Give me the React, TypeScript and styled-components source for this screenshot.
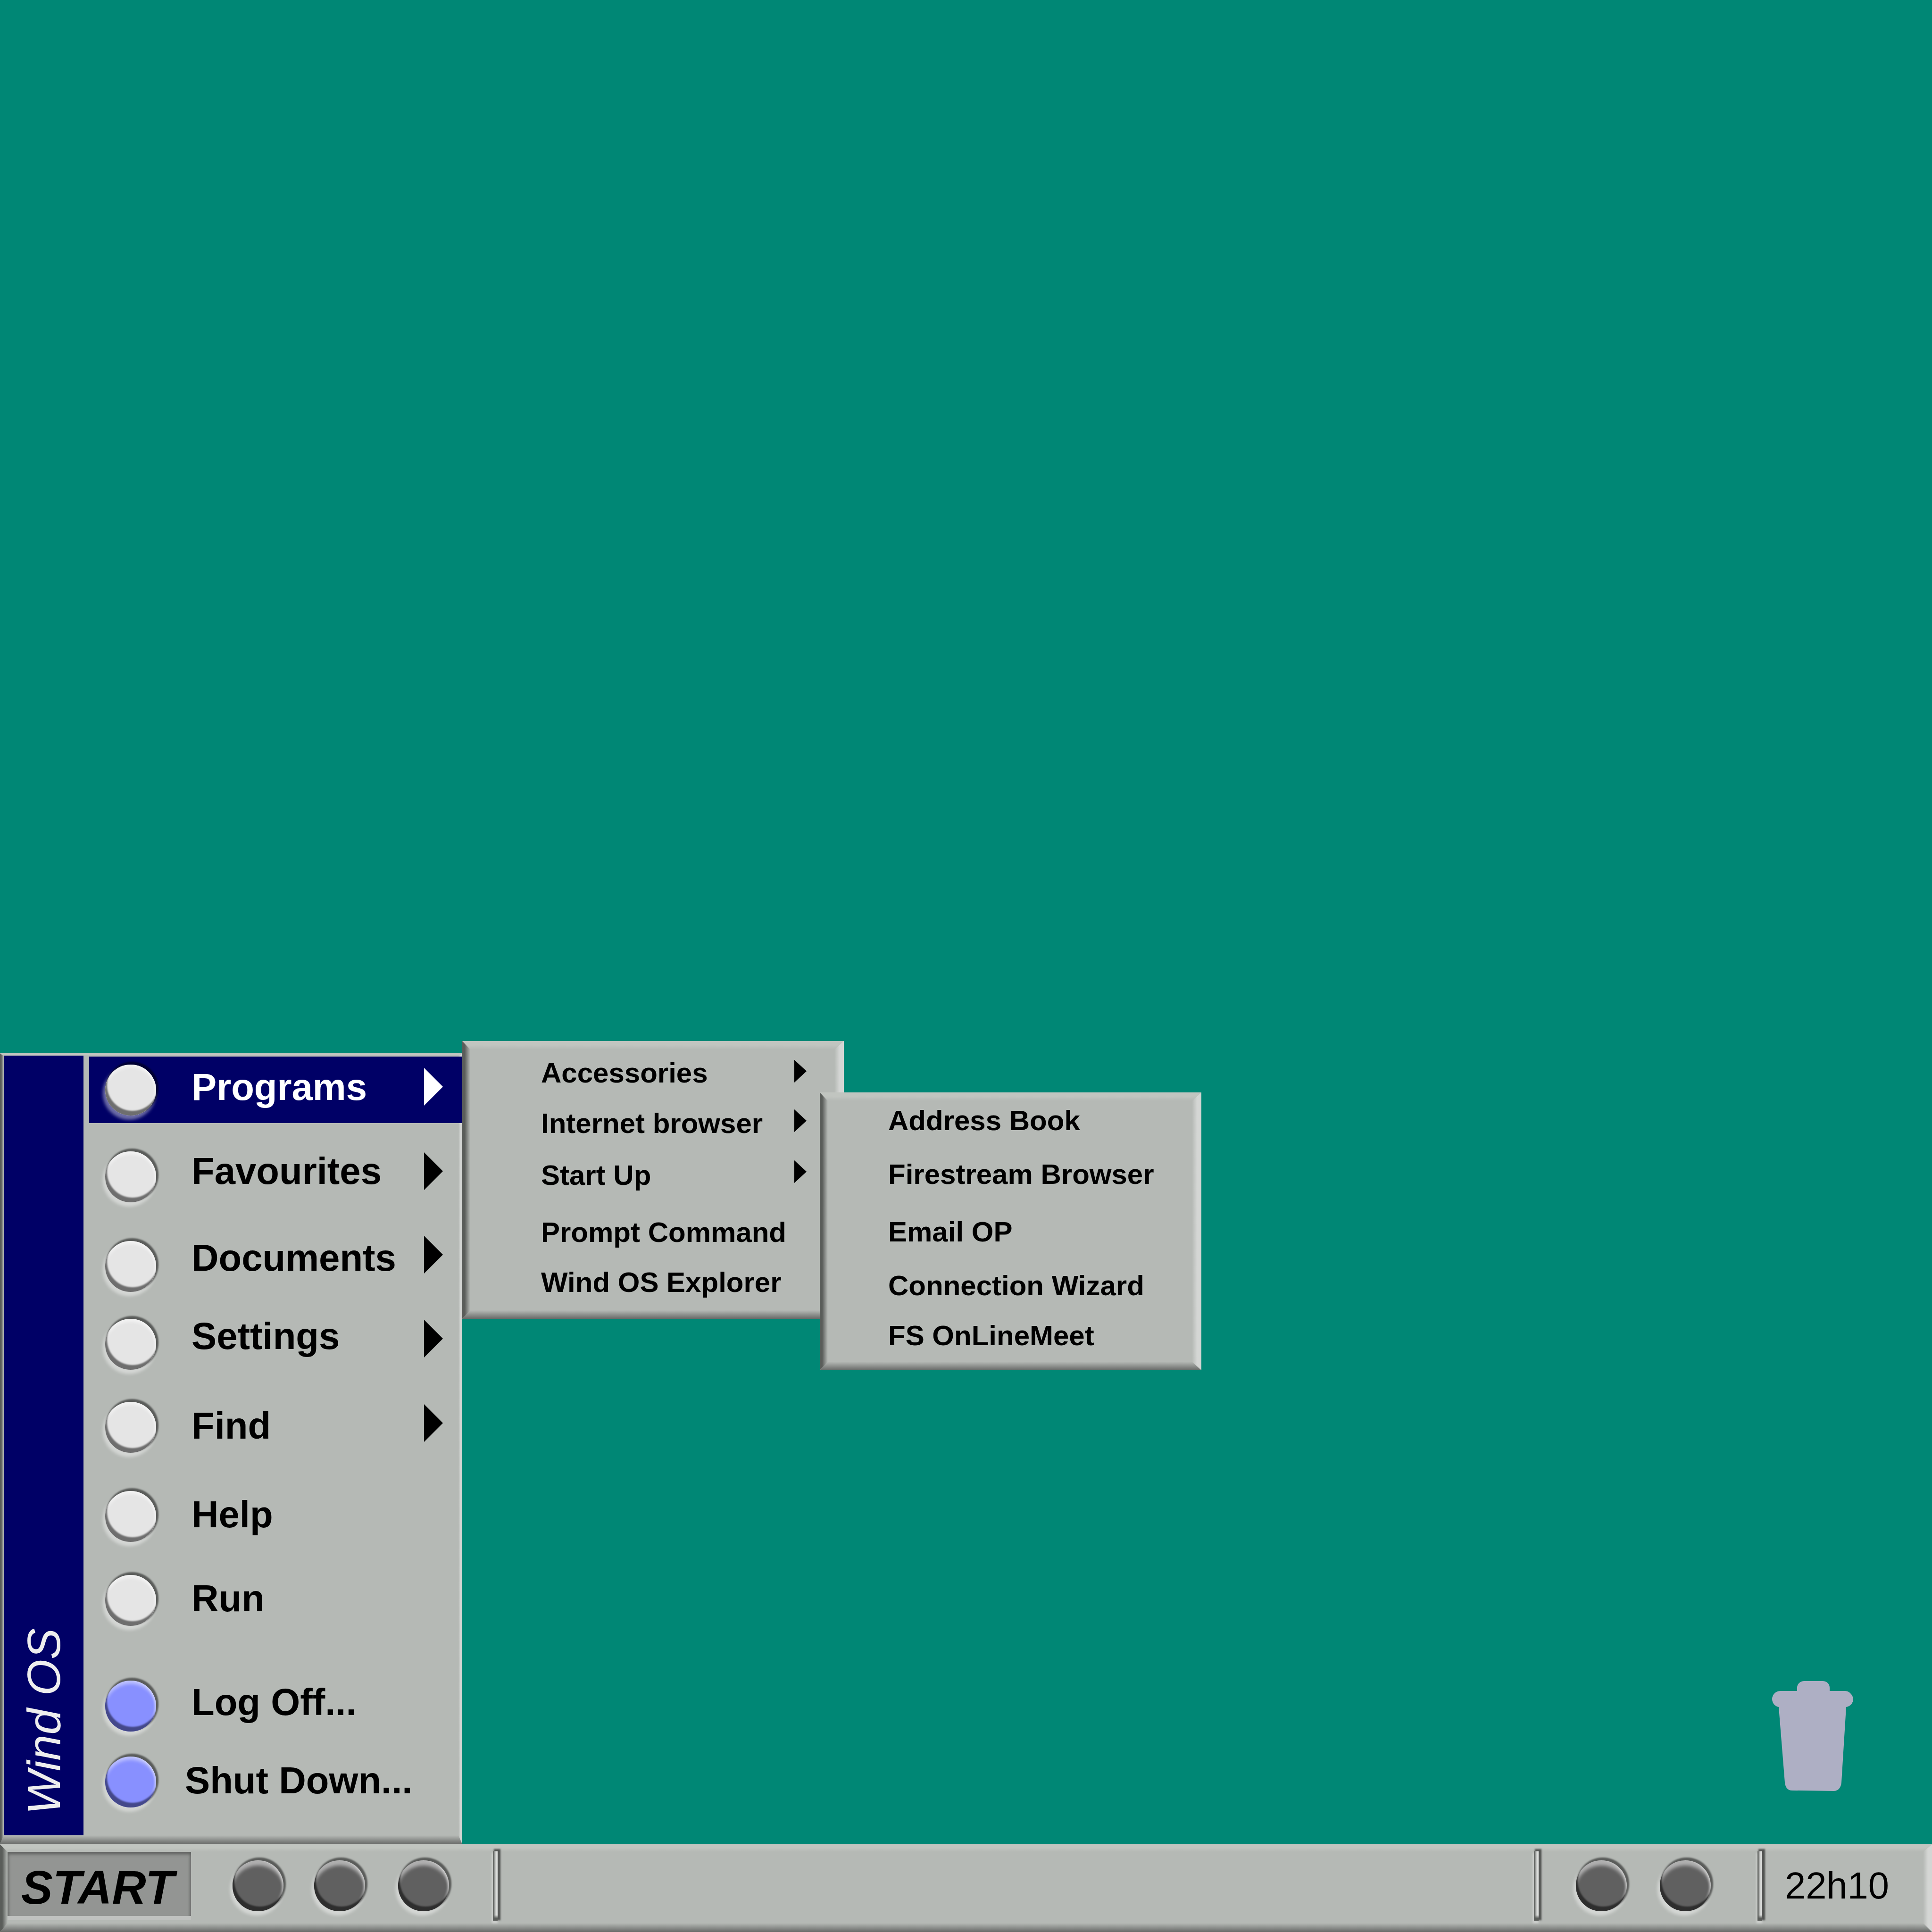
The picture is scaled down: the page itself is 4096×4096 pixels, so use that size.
import * as React from 'react';
import styled, {createGlobalStyle, css} from 'styled-components';

const colors = {
    DESKTOP: '#008775',
    PANEL: '#b5b9b5',
    NAVY: '#000066',
    TRASH: '#aeafc4',
    START: '#939593',
};

const tones = {
    light: {face: '#e5e5e5', low: '#6e6e6e', high: 'rgba(255,255,255,0.55)', glow: 8},
    blue: {face: '#8890ff', low: '#44488a', high: 'rgba(255,255,255,0.45)', glow: 9},
    dark: {face: '#606060', low: '#2e2e2e', high: 'rgba(255,255,255,0.5)', glow: 13},
};

type Tone = keyof typeof tones;

const GlobalStyle = createGlobalStyle`
    html, body {
        margin: 0;
        padding: 0;
        background: ${colors.DESKTOP};
    }
`;

const FADE = 'rgba(181, 185, 181, 0)';

// raised edge with mitred corners: sides in ::before, top and bottom in ::after.
// needs a positioned parent
const bevel = (top: number, right: number, bottom: number, left: number) => css`
    isolation: isolate;
    background: ${colors.PANEL};

    &::before,
    &::after {
        content: '';
        position: absolute;
        inset: 0;
        z-index: -1;
        background-repeat: no-repeat;
    }

    &::before {
        background-image:
            linear-gradient(90deg, #5a5d5a 30%, ${FADE} 100%),
            linear-gradient(270deg, #d4d6d4 45%, ${FADE} 100%);
        background-size: ${left}px 100%, ${right}px 100%;
        background-position: left top, right top;
    }

    &::after {
        background-color: ${colors.PANEL};
        background-image:
            linear-gradient(180deg, #c1c5c0 45%, ${FADE} 100%),
            linear-gradient(0deg, #686a68 0%, ${FADE} 100%);
        background-size: 100% ${top}px, 100% ${bottom}px;
        background-position: left top, left bottom;
        clip-path: polygon(
            0 0,
            100% 0,
            calc(100% - ${right}px) ${top}px,
            ${left}px ${top}px,
            0 0,
            0 100%,
            ${left}px calc(100% - ${bottom}px),
            calc(100% - ${right}px) calc(100% - ${bottom}px),
            100% 100%,
            0 100%
        );
    }
`;

const Page = styled.div`
    display: flex;
    flex-direction: column;
    width: 4096px;
    height: 4096px;
    overflow: hidden;
    font-family: 'Liberation Sans', Arial, sans-serif;
    color: #000;
`;

const Desktop = styled.main`
    position: relative;
    display: flex;
    flex: 1;
    align-items: flex-end;
    background: ${colors.DESKTOP};
`;

const StartMenu = styled.nav`
    position: relative;
    display: flex;
    box-sizing: border-box;
    width: 980px;
    height: 1677px;
    padding: 5px 0 19px 8px;
    ${bevel(6, 8, 19, 8)}
`;

const Sidebar = styled.div`
    display: flex;
    flex-direction: column;
    align-items: center;
    justify-content: flex-end;
    width: 169px;
    padding-bottom: 44px;
    box-sizing: border-box;
    background: ${colors.NAVY};
`;

const Brand = styled.span`
    writing-mode: vertical-rl;
    transform: rotate(180deg);
    font-size: 99px;
    line-height: 1;
    font-style: italic;
    white-space: nowrap;
    color: #eeeeee;
`;

const MenuList = styled.ul`
    display: flex;
    flex: 1;
    flex-direction: column;
    margin: 0;
    padding: 2px 0 0 12px;
    list-style: none;
`;

const MenuRow = styled.li<{$height: number; $active?: boolean}>`
    display: flex;
    align-items: flex-start;
    box-sizing: border-box;
    height: ${(props) => props.$height}px;
    padding: 0 41px 0 34px;
    color: ${(props) => (props.$active ? '#fff' : '#000')};
    background: ${(props) => (props.$active ? colors.NAVY : 'transparent')};
`;

const Bullet = styled.span<{$tone: Tone; $top?: number; $left?: number}>`
    flex: none;
    width: 108px;
    height: 108px;
    margin-top: ${(props) => props.$top || 0}px;
    margin-left: ${(props) => props.$left || 0}px;
    border-radius: 50%;
    background: ${(props) => tones[props.$tone].face};
    box-shadow:
        inset 4px -10px 3px 0 ${(props) => tones[props.$tone].low},
        inset 0 ${(props) => tones[props.$tone].glow}px 7px -2px ${(props) => tones[props.$tone].high},
        inset -5px 0 4px -2px ${(props) => tones[props.$tone].high},
        3px -4px 3px 2px rgba(0, 0, 0, 0.5),
        -3px 7px 6px 2px rgba(255, 255, 255, 0.42);
`;

const MenuLabel = styled.span<{$top: number; $left: number}>`
    margin-top: ${(props) => props.$top}px;
    margin-left: ${(props) => props.$left}px;
    font-size: 79.7px;
    line-height: 80px;
    font-weight: 700;
    white-space: nowrap;
`;

const Arrow = styled.span<{$top: number; $width: number; $height: number}>`
    flex: none;
    width: 0;
    height: 0;
    margin-top: ${(props) => props.$top}px;
    margin-left: auto;
    border-style: solid;
    border-color: transparent transparent transparent currentColor;
    border-width: ${(props) => props.$height / 2}px 0 ${(props) => props.$height / 2}px
        ${(props) => props.$width}px;
`;

const Flyout = styled.ul<{$left: number; $top: number; $padTop: number; $padLeft: number}>`
    position: absolute;
    left: ${(props) => props.$left}px;
    top: ${(props) => props.$top}px;
    display: flex;
    flex-direction: column;
    box-sizing: border-box;
    width: 809px;
    height: 589px;
    margin: 0;
    padding: ${(props) => props.$padTop}px 79px 0 ${(props) => props.$padLeft}px;
    list-style: none;
    ${bevel(18, 20, 18, 17)}
`;

const FlyoutRow = styled.li<{$gap: number}>`
    display: flex;
    align-items: flex-start;
    height: 60px;
    margin-top: ${(props) => props.$gap}px;
    font-size: 60px;
    line-height: 60px;
    font-weight: 700;
    white-space: nowrap;
`;

const Trash = styled.svg`
    position: absolute;
    right: 167px;
    top: 3564px;
    width: 172px;
    height: 233px;
    fill: ${colors.TRASH};
`;

const Taskbar = styled.footer`
    position: relative;
    display: flex;
    flex: none;
    align-items: center;
    box-sizing: border-box;
    height: 186px;
    padding: 0 0 10px 16px;
    ${bevel(16, 19, 19, 16)}
`;

const StartButton = styled.button`
    display: flex;
    align-items: center;
    box-sizing: border-box;
    width: 389px;
    height: 145px;
    padding: 7px 0 0 29px;
    border: 0;
    font-family: inherit;
    font-size: 100px;
    font-weight: 700;
    font-style: italic;
    color: #000;
    background: ${colors.START};
    box-shadow:
        inset 0 -9px 0 0 #c0c2c0,
        inset 0 7px 6px -2px #5e605e,
        inset 6px 0 5px -3px #6f716f,
        inset -6px 0 5px -3px #737573;
`;

const TrayGroove = styled.span<{$left: number}>`
    flex: none;
    width: 10px;
    height: 147px;
    margin-left: ${(props) => props.$left}px;
    background:
        linear-gradient(0deg, #5a5d5a 5px, rgba(90, 93, 90, 0) 12px),
        linear-gradient(90deg, #666966 0 15%, #a8aaa8 40%, #dcdedc 70%);
    box-shadow:
        4px -3px 3px 2px rgba(0, 0, 0, 0.55),
        -1px 4px 4px 1px rgba(255, 255, 255, 0.4);
`;

const Spacer = styled.span`
    flex: 1;
`;

const Clock = styled.time`
    margin-left: 48px;
    margin-right: 91px;
    font-size: 79.5px;
    line-height: 1;
`;

type MainItem = {
    label: string;
    tone: Tone;
    height: number;
    bulletTop: number;
    labelTop: number;
    labelLeft?: number;
    arrowTop?: number;
};

const mainItems: MainItem[] = [
    {label: 'Programs', tone: 'light', height: 141, bulletTop: 17, labelTop: 25, arrowTop: 24},
    {label: 'Favourites', tone: 'light', height: 209, bulletTop: 60, labelTop: 62, arrowTop: 62},
    {label: 'Documents', tone: 'light', height: 170, bulletTop: 41, labelTop: 37, arrowTop: 30},
    {label: 'Settings', tone: 'light', height: 170, bulletTop: 36, labelTop: 33, arrowTop: 38},
    {label: 'Find', tone: 'light', height: 190, bulletTop: 42, labelTop: 53, arrowTop: 47},
    {label: 'Help', tone: 'light', height: 180, bulletTop: 41, labelTop: 51},
    {label: 'Run', tone: 'light', height: 220, bulletTop: 39, labelTop: 49},
    {label: 'Log Off...', tone: 'blue', height: 180, bulletTop: 43, labelTop: 49},
    {label: 'Shut Down...', tone: 'blue', height: 191, bulletTop: 24, labelTop: 35, labelLeft: 61},
];

const programItems = [
    {label: 'Accessories', gap: 0, arrowTop: 2},
    {label: 'Internet browser', gap: 47, arrowTop: 0},
    {label: 'Start Up', gap: 50, arrowTop: -2},
    {label: 'Prompt Command', gap: 61},
    {label: 'Wind OS Explorer', gap: 46},
];

const browserItems = [
    {label: 'Address Book', gap: 0},
    {label: 'Firestream Browser', gap: 54},
    {label: 'Email OP', gap: 62},
    {label: 'Connection Wizard', gap: 54},
    {label: 'FS OnLineMeet', gap: 46},
];

const App: React.FC = () => {
    return (
        <Page>
            <GlobalStyle />
            <Desktop>
                <StartMenu>
                    <Sidebar>
                        <Brand>Wind OS</Brand>
                    </Sidebar>
                    <MenuList>
                        {mainItems.map((item, index) => (
                            <MenuRow key={item.label} $height={item.height} $active={index === 0}>
                                <Bullet $tone={item.tone} $top={item.bulletTop} />
                                <MenuLabel $top={item.labelTop} $left={item.labelLeft || 75}>
                                    {item.label}
                                </MenuLabel>
                                {item.arrowTop !== undefined && (
                                    <Arrow $top={item.arrowTop} $width={40} $height={80} />
                                )}
                            </MenuRow>
                        ))}
                    </MenuList>
                </StartMenu>
                <Flyout $left={980} $top={2207} $padTop={38} $padLeft={167}>
                    {programItems.map((item) => (
                        <FlyoutRow key={item.label} $gap={item.gap}>
                            {item.label}
                            {item.arrowTop !== undefined && (
                                <Arrow $top={item.arrowTop} $width={26} $height={48} />
                            )}
                        </FlyoutRow>
                    ))}
                </Flyout>
                <Flyout $left={1738} $top={2316} $padTop={30} $padLeft={145}>
                    {browserItems.map((item) => (
                        <FlyoutRow key={item.label} $gap={item.gap}>
                            {item.label}
                        </FlyoutRow>
                    ))}
                </Flyout>
                <Trash viewBox="0 0 172 233">
                    <path d="M53 21V14C53 6 60 0 68 0H107C116 0 122 6 122 14V21H155C165 21 172 32 172 38C172 46 166 54 157 55L147 215C146 226 140 233 131 233L42 232C34 232 28 226 27 215L14 55C6 54 0 46 0 38C0 30 7 21 17 21Z" />
                </Trash>
            </Desktop>
            <Taskbar>
                <StartButton>START</StartButton>
                <Bullet $tone="dark" $left={88} />
                <Bullet $tone="dark" $left={65} />
                <Bullet $tone="dark" $left={70} />
                <TrayGroove $left={93} />
                <Spacer />
                <TrayGroove $left={0} />
                <Bullet $tone="dark" $left={79} />
                <Bullet $tone="dark" $left={70} />
                <TrayGroove $left={99} />
                <Clock>22h10</Clock>
            </Taskbar>
        </Page>
    );
};

export default App;
